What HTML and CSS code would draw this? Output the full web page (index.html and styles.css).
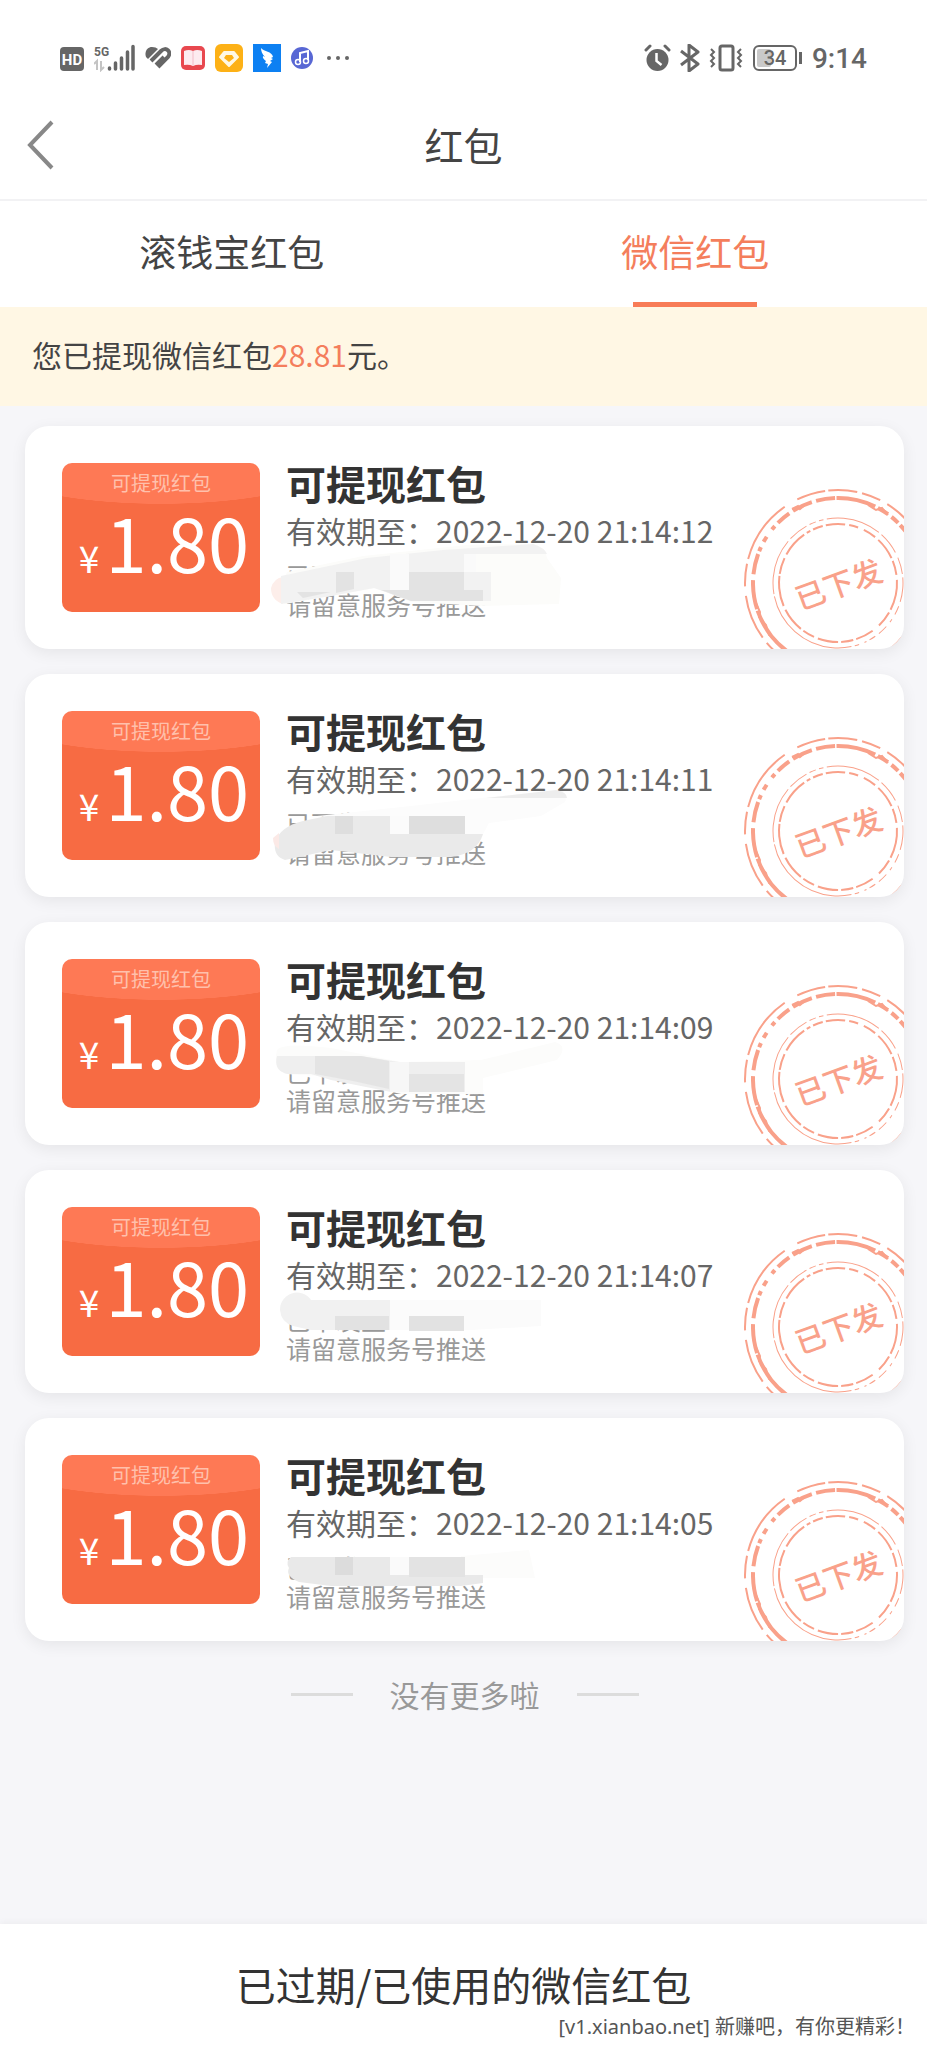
FILE: index.html
```html
<!DOCTYPE html>
<html lang="zh-CN">

<head>
  <meta charset="utf-8">
  <title>红包</title>
  <meta name="viewport" content="width=device-width, initial-scale=1">
  <link rel="stylesheet" href="styles.css">
</head>

<body>
  <!-- shared stamp rings -->
  <svg class="defs" width="0" height="0" aria-hidden="true">
    <symbol id="rings" viewBox="-95 -95 190 190">
      <g fill="none" stroke="#f9a18a">
        <circle r="93" stroke-width="2" pathLength="360" stroke-dasharray="18 3 12 5 24 3 9 4 40 3 6 5 32 4 3 3 9 5 36 2 10 4 28 6 14 3 40 9" transform="rotate(-96)" />
        <circle r="85" stroke-width="4" pathLength="360" stroke-dasharray="27 2 8 3 6 2 50 4 20 2 40 4 18 3 4 2 13 2 42 1 20 4 14 2 3 4 4 6 3 3 10 3 14 3 13 1" transform="rotate(-91)" />
        <path d="M-46 -74l6 -3 2 3 5 -4 M30 -78l8 5 6 -2 6 7" stroke-width="2" />
        <path d="M-82 20l4 9 -1 5 7 8 3 10 7 5" stroke-width="2" />
        <circle r="65" stroke-width="1" pathLength="360" stroke-dasharray="34 3 20 5 15 3 22 4 8 5 3 5 9 4 6 3 2 5 4 3 90 2 50 3 18 3 6 3 4 3" transform="rotate(-85)" />
        <circle r="59" stroke-width="2" pathLength="360" stroke-dasharray="12 4 9 6 13 4 22 3 14 5 30 3 16 8 18 3 12 3 20 4 12 3 24 4 30 2 16 4 26 3 4 3 10 3" transform="rotate(-95)" />
      </g>
    </symbol>
  </svg>

  <div class="status-bar">
    <div class="status-icons left">
      <svg width="24" height="28" viewBox="0 0 24 28">
        <rect x="0" y="3" width="24" height="24" rx="4" fill="#666" />
        <text class="hd-text" x="12" y="21" text-anchor="middle">HD</text>
      </svg>
      <svg width="41" height="28" viewBox="0 0 41 28">
        <text class="net-text" x="0" y="12">5G</text>
        <path d="M3 26v-9l-3 3M7 17v9l3-3" fill="none" stroke="#c4c4c4" stroke-width="2" />
        <path d="M15.500 24v1M21.500 19v6M27.500 14v11M33.500 8v17M39 2.500v22.500" stroke="#666" stroke-width="3.500" stroke-linecap="round" />
      </svg>
      <svg width="26" height="28" viewBox="0 0 26 28">
        <path d="M1 13C-1 7 3 3 7 3q4 0 6 2L3 15z" fill="#666" />
        <path d="M6 17L16 7c5-5 11 1 7 6L13 23M11 21l8-8" fill="none" stroke="#666" stroke-width="4" />
      </svg>
      <svg width="24" height="28" viewBox="0 0 24 28">
        <rect x="0" y="2" width="24" height="24" rx="5" fill="#e8484f" />
        <path d="M3 7q5-2 9 0q4-2 9 0v14q-5-1-9 1q-4-2-9-1z" fill="#fdebf0" />
        <path d="M12 7v14" stroke="#f3bcc8" stroke-width="1" />
      </svg>
      <svg width="28" height="28" viewBox="0 0 28 28">
        <rect width="28" height="28" rx="6" fill="#fdb116" />
        <path d="M9 8h10l4 5-9 9-9-9z" fill="#fff8e4" stroke="#fff8e4" stroke-width="2" stroke-linejoin="round" />
        <path d="M11 11h6l2 3-5 4-5-4z" fill="#fdb116" />
      </svg>
      <svg width="28" height="28" viewBox="0 0 28 28">
        <rect width="28" height="28" fill="#0d80f2" />
        <path d="M8 4c3 4 11 3 12 9l-2 1 2 1-3 2 2 1-5 6 1-4-3-1 1-2c-4-3-3-4-3-5l2 1c-3-3-4-6-4-9z" fill="#fff" />
      </svg>
      <svg width="22" height="28" viewBox="0 0 22 28">
        <circle cx="11" cy="14" r="11" fill="#5867d4" />
        <path d="M9 18V9l8-2v9" fill="none" stroke="#fff" stroke-width="2" />
        <circle cx="7" cy="18" r="2.500" fill="none" stroke="#fff" stroke-width="1.500" />
        <circle cx="15" cy="17" r="2.500" fill="none" stroke="#fff" stroke-width="1.500" />
      </svg>
      <svg width="28" height="28" viewBox="0 0 28 28" fill="#666">
        <circle cx="6" cy="14" r="2" />
        <circle cx="15" cy="14" r="2" />
        <circle cx="24" cy="14" r="2" />
      </svg>
    </div>
    <div class="status-icons">
      <svg width="27" height="28" viewBox="0 0 27 28">
        <circle cx="13.500" cy="16" r="11" fill="#666" />
        <path d="M2 6l4-4M25 6l-4-4" stroke="#666" stroke-width="3" stroke-linecap="round" />
        <path d="M12.500 9v8l5 4" fill="none" stroke="#fff" stroke-width="2.500" />
      </svg>
      <svg width="20" height="28" viewBox="0 0 20 28">
        <path d="M1 7l17 13-9 7V1l9 7L1 21" fill="none" stroke="#666" stroke-width="3" stroke-linejoin="round" />
      </svg>
      <svg width="34" height="28" viewBox="0 0 34 28">
        <rect x="11" y="2" width="13" height="24" rx="2" fill="none" stroke="#666" stroke-width="3" />
        <path d="M2 5l3 3-3 3 3 3-3 3 3 3-3 3M32 5l-3 3 3 3-3 3 3 3-3 3 3 3" fill="none" stroke="#666" stroke-width="2" />
      </svg>
      <svg width="51" height="28" viewBox="0 0 51 28">
        <rect x="2" y="2" width="42" height="24" rx="5" fill="none" stroke="#666" stroke-width="2" />
        <rect x="5" y="5" width="14" height="18" rx="2" fill="#c9c9c9" />
        <path d="M48.500 8v12" stroke="#666" stroke-width="3" />
        <text class="battery-text" x="23" y="21" text-anchor="middle">34</text>
      </svg>
      <span class="clock">9:14</span>
    </div>
  </div>

  <header class="nav-bar">
    <button class="back" type="button" aria-label="返回">
      <svg width="28" height="50" viewBox="0 0 28 50">
        <path d="M25 2L3 25l22 23" fill="none" stroke="#888" stroke-width="4" />
      </svg>
    </button>
    <h1>红包</h1>
  </header>

  <nav class="tabs">
    <button type="button" class="tab">滚钱宝红包</button>
    <button type="button" class="tab active">微信红包</button>
  </nav>

  <p class="notice">您已提现微信红包<span class="amount">28.81</span>元。</p>

  <main class="list">
    <article class="card">
      <div class="packet">
        <span class="packet-label">可提现红包</span>
        <span class="price"><span class="yen">¥</span>1.80</span>
      </div>
      <div class="info">
        <h2>可提现红包</h2>
        <p class="date">有效期至：2022-12-20 21:14:12</p>
        <p class="desc">已下发至</p>
        <p class="desc">请留意服务号推送</p>
      </div>
      <svg class="smudge" width="310" height="80" viewBox="0 0 310 80">
        <path d="M10 40L16 28 92 12 196 1 262 0 Q274 2 276 14L290 34 288 60 210 62 140 58 105 44 60 52 14 60Q3 52 10 40z" fill="#fcfcfa" />
        <path d="M0 44Q3 34 12 33V60Q0 56 0 44z" fill="#fdeeea" />
        <path d="M10 32L96 14 172 6 262 0Q274 4 276 10H205V28H220V57H140L103 44 60 52 10 60z" fill="#f2f2f2" />
        <path d="M65 28h18v17l-18 4zM138 28h55v18h19v11h-72l-30-11h28zM26 48h34l-28 6z" fill="#e3e3e3" />
        <path d="M119 10h19v36h-19zM193 10h12v18h-12z" fill="#fafafa" />
      </svg>
      <div class="stamp">
        <svg width="190" height="190"><use href="#rings" /></svg>
        <span>已下发</span>
      </div>
    </article>

    <article class="card">
      <div class="packet">
        <span class="packet-label">可提现红包</span>
        <span class="price"><span class="yen">¥</span>1.80</span>
      </div>
      <div class="info">
        <h2>可提现红包</h2>
        <p class="date">有效期至：2022-12-20 21:14:11</p>
        <p class="desc">已下发至</p>
        <p class="desc">请留意服务号推送</p>
      </div>
      <svg class="smudge" width="310" height="80" viewBox="0 0 310 80">
        <path d="M46 24L140 14 210 6 280 -1Q298 4 294 10L270 24 218 31 210 46z" fill="#fcfcfc" />
        <path d="M215 6L285 -2Q296 0 296 6z" fill="#ededed" />
        <path d="M4 50Q10 34 32 29L56 24H194V42H212Q206 62 180 65H120L60 58 14 68Q2 64 4 50z" fill="#eaeaea" />
        <path d="M64 24h18v18h-18zM138 24h56v18h-56z" fill="#dedede" />
        <path d="M119 24h19v18h-19z" fill="#fbfbfb" />
        <path d="M2 46l6-5v16q-6-3-6-11z" fill="#fbe9e6" />
      </svg>
      <div class="stamp">
        <svg width="190" height="190"><use href="#rings" /></svg>
        <span>已下发</span>
      </div>
    </article>

    <article class="card">
      <div class="packet">
        <span class="packet-label">可提现红包</span>
        <span class="price"><span class="yen">¥</span>1.80</span>
      </div>
      <div class="info">
        <h2>可提现红包</h2>
        <p class="date">有效期至：2022-12-20 21:14:09</p>
        <p class="desc">已下发至</p>
        <p class="desc">请留意服务号推送</p>
      </div>
      <svg class="smudge" width="310" height="80" viewBox="0 0 310 80">
        <path d="M6 10Q12 2 60 8L130 22 210 20 284 2Q298 6 286 20L212 38V54H130L50 36 14 34Q2 26 6 10z" fill="#fcfcfb" />
        <path d="M6 16H90L128 22H194V52H120L60 40 40 34 16 34Q2 30 6 16z" fill="#efefef" />
        <path d="M44 16h46l28 5v28l-36-8-38-7zM138 34h55v18h-55z" fill="#e4e4e4" />
        <path d="M119 22h19v30h-19z" fill="#f7f7f7" />
      </svg>
      <div class="stamp">
        <svg width="190" height="190"><use href="#rings" /></svg>
        <span>已下发</span>
      </div>
    </article>

    <article class="card">
      <div class="packet">
        <span class="packet-label">可提现红包</span>
        <span class="price"><span class="yen">¥</span>1.80</span>
      </div>
      <div class="info">
        <h2>可提现红包</h2>
        <p class="date">有效期至：2022-12-20 21:14:07</p>
        <p class="desc">已下发至</p>
        <p class="desc">请留意服务号推送</p>
      </div>
      <svg class="smudge" width="310" height="80" viewBox="0 0 310 80">
        <path d="M30 12H270V38L200 42H60z" fill="#fbfbfb" />
        <path d="M9 22a17 17 0 0 1 31-10H119V42H40L22 38Q10 34 9 22z" fill="#f1f1f1" />
        <path d="M64 28h54v14h-54zM138 28h55v15h-55z" fill="#e2e2e2" />
      </svg>
      <div class="stamp">
        <svg width="190" height="190"><use href="#rings" /></svg>
        <span>已下发</span>
      </div>
    </article>

    <article class="card">
      <div class="packet">
        <span class="packet-label">可提现红包</span>
        <span class="price"><span class="yen">¥</span>1.80</span>
      </div>
      <div class="info">
        <h2>可提现红包</h2>
        <p class="date">有效期至：2022-12-20 21:14:05</p>
        <p class="desc">已下发至</p>
        <p class="desc">请留意服务号推送</p>
      </div>
      <svg class="smudge" width="310" height="80" viewBox="0 0 310 80">
        <path d="M190 20L258 14 264 42H190z" fill="#fcfcfb" />
        <path d="M20 21H194V39H212V47L190 50H60L28 46Q14 40 18 32 14 26 20 21z" fill="#e9e9e9" />
        <path d="M64 21h18v18h-18z" fill="#dcdcdc" />
        <path d="M138 21h56v20h-56z" fill="#e3e3e3" />
        <path d="M119 21h19v18h-19z" fill="#fafafa" />
      </svg>
      <div class="stamp">
        <svg width="190" height="190"><use href="#rings" /></svg>
        <span>已下发</span>
      </div>
    </article>

    <p class="no-more">没有更多啦</p>
  </main>

  <footer class="bottom-bar">
    <a href="#">已过期/已使用的微信红包</a>
    <span class="site-mark">[v1.xianbao.net] 新赚吧，有你更精彩！</span>
  </footer>
</body>

</html>
```
FILE: styles.css
```css
* {
  margin: 0;
  padding: 0;
  box-sizing: border-box;
}

body {
  display: flex;
  flex-direction: column;
  min-height: 100vh;
  background-color: #f6f6f9;
  color: #444;
  font-family: "Noto Sans CJK SC", sans-serif;
}

button {
  border: none;
  background: none;
  font-family: inherit;
  cursor: pointer;
}

.defs {
  position: absolute;
}

/* status bar */
.status-bar {
  display: flex;
  justify-content: space-between;
  align-items: center;
  height: 90px;
  padding: 26px 60px 0;
  background-color: #fff;
}

.status-icons {
  display: flex;
  align-items: center;
  gap: 9px;
}

.status-icons.left {
  gap: 10px;
}

.hd-text {
  fill: #fff;
  font: bold 15px Roboto, sans-serif;
}

.net-text {
  fill: #666;
  font: bold 12px Roboto, sans-serif;
}

.battery-text {
  fill: #666;
  font: 500 20px Roboto, sans-serif;
}

.clock {
  color: #666;
  font: 500 28px Roboto, sans-serif;
}

/* title bar */
.nav-bar {
  display: grid;
  grid-template-columns: 80px 1fr 80px;
  align-items: center;
  height: 111px;
  background-color: #fff;
  border-bottom: 2px solid #f2f2f4;
}

.back {
  display: flex;
  padding-left: 27px;
}

.nav-bar h1 {
  padding-bottom: 2px;
  text-align: center;
  font-size: 39px;
  font-weight: 400;
  line-height: 60px;
}

/* tabs */
.tabs {
  display: grid;
  grid-template-columns: 1fr 1fr;
  background-color: #fff;
}

.tab {
  display: flex;
  flex-direction: column;
  align-items: center;
  height: 106px;
  padding-top: 22px;
  color: #444;
  font-size: 37px;
  line-height: 56px;
}

.tab.active {
  color: #f47e5c;
}

.tab.active::after {
  content: "";
  width: 124px;
  height: 5px;
  margin-top: auto;
  background-color: #f87c57;
}

.notice {
  padding: 22px 32px 27px;
  background-color: #fff7e4;
  font-size: 30px;
  line-height: 50px;
}

.amount {
  color: #f47e5c;
}

/* red packet list */
.list {
  display: flex;
  flex: 1;
  flex-direction: column;
  gap: 25px;
  padding: 20px 23px 20px 25px;
}

.card {
  position: relative;
  display: flex;
  align-items: flex-start;
  gap: 26px;
  padding: 33px 37px 30px;
  border-radius: 24px;
  background-color: #fff;
  box-shadow: 0 4px 16px rgba(0, 0, 0, 0.07);
  overflow: hidden;
}

.packet {
  display: flex;
  flex-direction: column;
  align-items: center;
  width: 198px;
  height: 149px;
  margin-top: 4px;
  border-radius: 10px;
  background: radial-gradient(ellipse 170px 40px at 50% 1px, #fe7955 99%, #f76b43 100%);
  color: #fff;
}

.packet-label {
  padding-top: 6px;
  color: #ffc0ac;
  font-size: 20px;
  line-height: 28px;
}

.price {
  padding-left: 6px;
  font-size: 74px;
  line-height: 88px;
}

.yen {
  margin-right: 6px;
  font-size: 37px;
}

.info h2 {
  color: #333;
  font-size: 40px;
  font-weight: 700;
  line-height: 48px;
}

.date {
  margin-bottom: 8px;
  color: #666;
  font-size: 30px;
  line-height: 46px;
}

.desc {
  color: #999;
  font-size: 25px;
  line-height: 29px;
}

/* wiped-out strip over the first line of the description */
.smudge {
  position: absolute;
  left: 246px;
  top: 118px;
  overflow: visible;
}

.stamp {
  position: absolute;
  right: -29px;
  bottom: -29px;
  display: grid;
  place-items: center;
}

.stamp svg,
.stamp span {
  grid-area: 1 / 1;
}

.stamp span {
  color: #f9a18a;
  font-size: 30px;
  font-weight: 500;
  line-height: 40px;
  transform: rotate(-20deg);
}

.no-more {
  display: flex;
  justify-content: center;
  align-items: center;
  gap: 37px;
  padding-top: 6px;
  color: #999;
  font-size: 30px;
  line-height: 44px;
}

.no-more::before,
.no-more::after {
  content: "";
  width: 62px;
  height: 3px;
  background-color: #dcdcdc;
}

/* bottom link */
.bottom-bar {
  position: relative;
  padding: 30px 0 34px;
  background-color: #fff;
  box-shadow: 0 -2px 6px rgba(0, 0, 0, 0.04);
  text-align: center;
}

.bottom-bar a {
  display: block;
  color: #333;
  font-size: 40px;
  line-height: 60px;
  text-decoration: none;
}

.site-mark {
  position: absolute;
  right: 12px;
  bottom: 6px;
  color: #555;
  font-family: "Noto Sans", "Noto Sans CJK SC", sans-serif;
  font-size: 20px;
  line-height: 30px;
}
```
